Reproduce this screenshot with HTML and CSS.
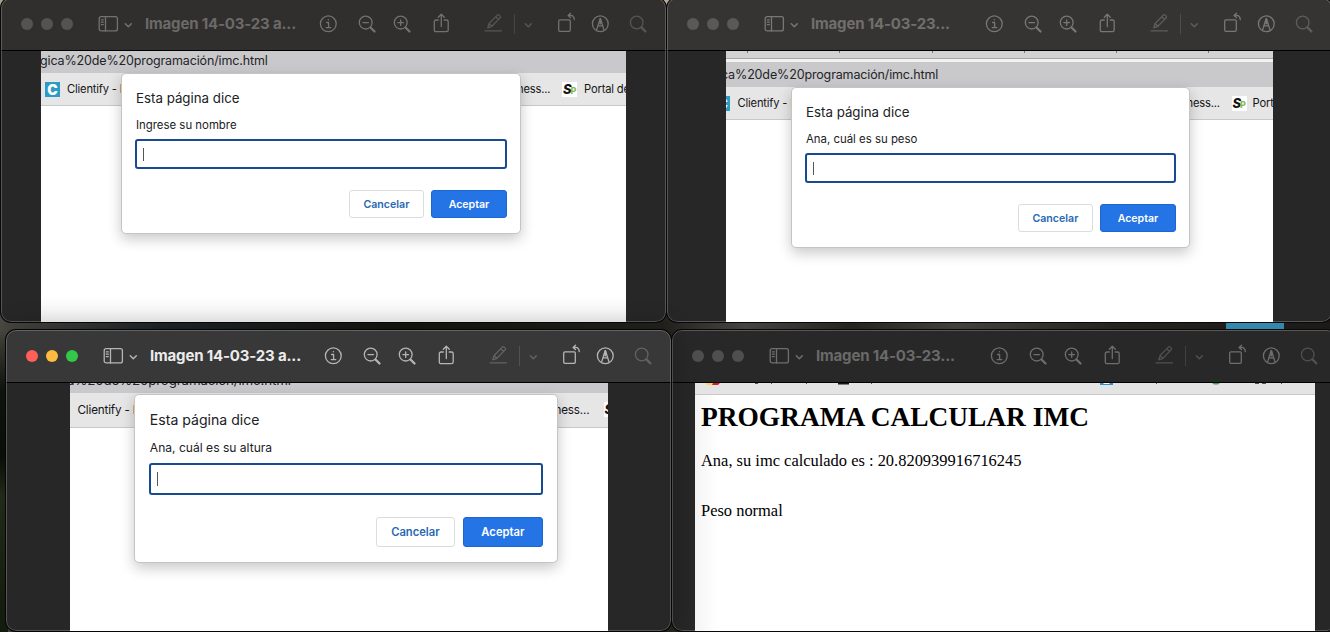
FILE: index.html
```
<!DOCTYPE html>
<html lang="es">
<head>
<meta charset="utf-8">
<title>Programa calcular IMC</title>
<link rel="stylesheet" href="styles.css">
</head>
<body>
<svg class="sprite" aria-hidden="true">
  <symbol id="i-side" viewBox="0 0 22 18"><rect x="2.2" y="1.7" width="18.2" height="14.2" rx="2"/><path d="M8.500 2v14M4.300 4.8h2M4.300 7.2h2M4.300 9.6h2"/></symbol>
  <symbol id="i-chev" viewBox="0 0 10 10"><path d="M2.300 3.7l3 3 3-3" stroke-width="1.5"/></symbol>
  <symbol id="i-info" viewBox="0 0 24 24"><circle cx="12.3" cy="11.8" r="7.9"/><path d="M10.6 10.5h2v5M10.2 15.6h4.6" /><circle cx="12.4" cy="7.8" r=".7" class="dotfill"/></symbol>
  <symbol id="i-out" viewBox="0 0 24 24"><circle cx="10.700" cy="10.6" r="6.4"/><path d="M7.900 10.6h5.6"/><path d="M15.5 15.5l4 4" stroke-width="2.300"/></symbol>
  <symbol id="i-in" viewBox="0 0 24 24"><circle cx="10.700" cy="10.6" r="6.4"/><path d="M7.900 10.6h5.6M10.700 7.8v5.6"/><path d="M15.5 15.5l4 4" stroke-width="2.300"/></symbol>
  <symbol id="i-share" viewBox="0 0 24 24"><path d="M9.3 8H7a1.7 1.7 0 0 0-1.700 1.700v8.300a1.700 1.700 0 0 0 1.700 1.700h10.500a1.700 1.700 0 0 0 1.700-1.700V9.700A1.700 1.700 0 0 0 17.500 8h-2.300M12.300 14.500V2.500M9.300 5.300l3-3 3 3"/></symbol>
  <symbol id="i-pen" viewBox="0 0 24 24"><path d="M4 18.800h16.500M6.800 15.800l1.300-4.300 8.200-8.400a1.300 1.300 0 0 1 1.900 0l.9.9a1.300 1.300 0 0 1 0 1.900l-8.200 8.400zM14.800 4.800l2.700 2.700M8.200 11.700l2.600 2.600"/></symbol>
  <symbol id="i-rot" viewBox="0 0 24 24"><rect x="4.700" y="7.900" width="11.600" height="11.400" rx="1.200"/><path d="M14.200 3.400h2.300c2.400 0 3.600 1.300 3.800 4.200M16.500 1.300l-2.400 2.100 2.400 2.100"/></symbol>
  <symbol id="i-mark" viewBox="0 0 24 24"><circle cx="12.300" cy="11.800" r="7.900"/><path d="M8.700 17.600l3-9.600q.6-1.500 1.200 0l3 9.600M10.200 13.800h4.200"/><path d="M12.300 7v4.500" stroke-width="2"/></symbol>
  <symbol id="i-find" viewBox="0 0 24 24"><circle cx="10.700" cy="10.500" r="6.300"/><path d="M15.400 15.400l4 4" stroke-width="2.200"/></symbol>
</svg>
<main class="desktop">
  <div class="desk-blue"></div>

  <section class="window w1">
    <header class="bar">
      <div class="lights"><i></i><i></i><i></i></div>
      <svg class="side"><use href="#i-side"/></svg><svg class="chev"><use href="#i-chev"/></svg>
      <h2>Imagen 14-03-23 a...</h2>
      <svg class="ic"><use href="#i-info"/></svg><svg class="ic out"><use href="#i-out"/></svg><svg class="ic in"><use href="#i-in"/></svg><svg class="ic share"><use href="#i-share"/></svg><svg class="ic pen"><use href="#i-pen"/></svg><span class="sep"></span><svg class="chev dim"><use href="#i-chev"/></svg><svg class="ic rot"><use href="#i-rot"/></svg><svg class="ic mark"><use href="#i-mark"/></svg><svg class="ic find"><use href="#i-find"/></svg>
    </header>
    <div class="page">
      <div class="url"><span>gica%20de%20programación/imc.html</span></div>
      <div class="marks"><b class="cl">C</b><span class="name">Clientify - I</span><span class="ness">ness...</span><b class="sp">S<em>P</em></b><span class="portal">Portal de</span></div>
      <div class="dialog">
        <h3>Esta página dice</h3><p>Ingrese su nombre</p>
        <div class="field"><i></i></div>
        <div class="buttons"><button>Cancelar</button><button class="ok">Aceptar</button></div>
      </div>
    </div>
  </section>

  <section class="window w2">
    <header class="bar">
      <div class="lights"><i></i><i></i><i></i></div>
      <svg class="side"><use href="#i-side"/></svg><svg class="chev"><use href="#i-chev"/></svg>
      <h2>Imagen 14-03-23...</h2>
      <svg class="ic"><use href="#i-info"/></svg><svg class="ic out"><use href="#i-out"/></svg><svg class="ic in"><use href="#i-in"/></svg><svg class="ic share"><use href="#i-share"/></svg><svg class="ic pen"><use href="#i-pen"/></svg><span class="sep"></span><svg class="chev dim"><use href="#i-chev"/></svg><svg class="ic rot"><use href="#i-rot"/></svg><svg class="ic mark"><use href="#i-mark"/></svg><svg class="ic find"><use href="#i-find"/></svg>
    </header>
    <div class="page">
      <div class="tabs"><i></i><i></i><i></i><i></i><i></i><i></i></div>
      <div class="url"><span>ca%20de%20programación/imc.html</span></div>
      <div class="marks"><b class="cl">C</b><span class="name">Clientify - I</span><span class="ness">ness...</span><b class="sp">S<em>P</em></b><span class="portal">Port</span></div>
      <div class="dialog">
        <h3>Esta página dice</h3><p>Ana, cuál es su peso</p>
        <div class="field"><i></i></div>
        <div class="buttons"><button>Cancelar</button><button class="ok">Aceptar</button></div>
      </div>
    </div>
  </section>

  <section class="window w4">
    <header class="bar">
      <div class="lights"><i></i><i></i><i></i></div>
      <svg class="side"><use href="#i-side"/></svg><svg class="chev"><use href="#i-chev"/></svg>
      <h2>Imagen 14-03-23...</h2>
      <svg class="ic"><use href="#i-info"/></svg><svg class="ic out"><use href="#i-out"/></svg><svg class="ic in"><use href="#i-in"/></svg><svg class="ic share"><use href="#i-share"/></svg><svg class="ic pen"><use href="#i-pen"/></svg><span class="sep"></span><svg class="chev dim"><use href="#i-chev"/></svg><svg class="ic rot"><use href="#i-rot"/></svg><svg class="ic mark"><use href="#i-mark"/></svg><svg class="ic find"><use href="#i-find"/></svg>
    </header>
    <div class="page result">
      <svg class="strip" viewBox="0 0 620 11"><path fill="#f8d64e" d="M11 0h8l-2 2h-5z"/><path fill="#d5202b" d="M18 0h7l-2 2h-6z"/><path fill="#181818" d="M143 0h11v1.500h-11z"/><path fill="#2a93c8" d="M405 0h13v2h-13z"/><path fill="#fff" d="M408 0h7l-1 1h-5z"/><path fill="#35a853" d="M517 0h8l-2 1.500h-4z"/><path fill="#555" d="M60 0h3v1h-3zM76 0h1v1h-1zM111 0h1v1h-1zM176 0h1v1h-1zM461 0h1v1h-1zM560 0h4v1h-4zM567 0h4v1h-4zM586 0h1v1h-1z"/></svg>
      <h1>PROGRAMA CALCULAR IMC</h1>
      <p>Ana, su imc calculado es : 20.820939916716245</p>
      <p class="weight">Peso normal</p>
    </div>
  </section>

  <section class="window w3">
    <header class="bar">
      <div class="lights"><i></i><i></i><i></i></div>
      <svg class="side"><use href="#i-side"/></svg><svg class="chev"><use href="#i-chev"/></svg>
      <h2>Imagen 14-03-23 a...</h2>
      <svg class="ic"><use href="#i-info"/></svg><svg class="ic out"><use href="#i-out"/></svg><svg class="ic in"><use href="#i-in"/></svg><svg class="ic share"><use href="#i-share"/></svg><svg class="ic pen"><use href="#i-pen"/></svg><span class="sep"></span><svg class="chev dim"><use href="#i-chev"/></svg><svg class="ic rot"><use href="#i-rot"/></svg><svg class="ic mark"><use href="#i-mark"/></svg><svg class="ic find"><use href="#i-find"/></svg>
    </header>
    <div class="page">
      <div class="url"><span>a%20de%20programación/imc.html</span></div>
      <div class="marks"><span class="name">Clientify - I</span><span class="ness">ness...</span><b class="sp">S<em>P</em></b></div>
      <div class="dialog">
        <h3>Esta página dice</h3><p>Ana, cuál es su altura</p>
        <div class="field"><i></i></div>
        <div class="buttons"><button>Cancelar</button><button class="ok">Aceptar</button></div>
      </div>
    </div>
  </section>
</main>
</body>
</html>
```

FILE: styles.css
```
* { box-sizing: border-box; }
body { margin: 0; font-family: Inter, "Liberation Sans", sans-serif; }
h1, h2, h3, p { margin: 0; }
.sprite { position: absolute; width: 0; height: 0; }
symbol .dotfill { fill: currentColor; stroke: none; }

.desktop {
  position: relative; width: 1330px; height: 632px; overflow: hidden;
  background:
    radial-gradient(circle at 0 0, #aaa18f 0 8px, transparent 12px),
    radial-gradient(circle at 666px 0, #b9ab96 0 5px, transparent 8px),
    linear-gradient(to right, #4b4942, #20252a 12%, #15160f 30%, #24231e 50%, #454442 56%, #252420 64%, #44413d 72%, #242320 84%, #1b1a18);
}
.desktop::before { content: ""; position: absolute; left: 0; top: 330px; width: 8px; height: 302px; background: linear-gradient(#4b4a42, #11160f 20%, #0c100b 42%, #26301b 55%, #151d10); }
.desk-blue { position: absolute; left: 1226px; top: 322px; width: 58px; height: 8px; background: #3487ad; }

.window {
  position: absolute; width: 665px; overflow: hidden; border-radius: 10px;
  background: #272727; box-shadow: 0 0 0 1px #080808;
  display: flex; flex-direction: column;
}
.window::after { content: ""; position: absolute; inset: 0; border: 1px solid rgba(255,255,255,.22); border-radius: 10px; pointer-events: none; }
.w1 { left: 1px; top: -2px; height: 324px; --bar: #302f2d; --txt: #6b6a68; --icon: #737270; --dim: #575654; --light: #545352; }
.w2 { left: 667px; top: -2px; height: 324px; --bar: #353432; --txt: #706f6d; --icon: #787775; --dim: #5e5d5b; --light: #5a5958; }
.w3 { left: 6px; top: 330px; height: 301px; --bar: #383838; --txt: #ececec; --icon: #b5b5b5; --dim: #626262; --light: #ff5f57; box-shadow: 0 0 0 1px #050505, 0 0 24px 4px rgba(0,0,0,.22); }
.w4 { left: 672px; top: 330px; height: 301px; --bar: #282828; --txt: #6a6a6a; --icon: #6e6e6e; --dim: #505050; --light: #4f4f4f; }

.bar {
  flex: none; height: 53px; padding: 0 0 1px 20px; display: flex; align-items: center;
  background: var(--bar); border-bottom: 1px solid #000; color: var(--icon);
}
.bar svg { flex: none; fill: none; stroke: currentColor; stroke-width: 1.3; stroke-linecap: round; stroke-linejoin: round; }
.lights { display: flex; gap: 8px; }
.lights i { width: 12px; height: 12px; border-radius: 50%; background: var(--light); }
.w3 .lights i:nth-child(2) { background: #febb40; }
.w3 .lights i:nth-child(3) { background: #34c84a; }
.side { width: 22px; height: 18px; margin-left: 24px; }
.chev { width: 10px; height: 10px; margin: 2px 0 0 4px; }
.bar h2 { flex: none; width: 171px; margin-left: 12px; font-size: 15px; line-height: 20px; font-weight: 700; letter-spacing: -.17px; color: var(--txt); white-space: nowrap; }
.ic { width: 24px; height: 24px; }
.out { margin-left: 15px; }
.in { margin-left: 11px; }
.share { margin-left: 15px; }
.pen { margin-left: 28px; color: var(--dim); }
.sep { width: 1px; height: 20px; margin-left: 9px; background: var(--dim); opacity: .6; }
.chev.dim { margin-left: 8px; color: var(--dim); }
.rot { margin-left: 21px; }
.mark { margin-left: 10px; }
.find { margin-left: 14px; color: var(--dim); }

.page { position: relative; flex: 1; overflow: hidden; background: #fff; font-size: 10px; }
.w1 .page { margin: 0 40px; width: 585px; background: linear-gradient(#fff 245px, #f2f2f2 271px); }
.w2 .page { margin-left: 59px; width: 547px; }
.w3 .page { margin-left: 64px; width: 538px; font-size: 10.6px; }
.w4 .page { margin-left: 23px; width: 620px; background: linear-gradient(to right, #f4f4f4, #fff 22px); }

.tabs { height: 11px; display: flex; padding-left: 21px; gap: 91.300px; background: linear-gradient(#d2d2d2 7px, #a5a5a5 7px 8px, #f2f2f2 8px); }
.tabs i { width: 1px; height: 2px; background: #777; }
.url { height: 22px; overflow: hidden; background: #c9c9cb; color: #242427; display: flex; }
.url span { font-size: 12.500px; letter-spacing: -.14px; line-height: 20px; white-space: nowrap; }
.w1 .url span { margin-left: -1px; }
.w2 .url { height: 25px; }
.w2 .url span { margin-left: -5px; line-height: 26px; }
.w3 .url { height: 10px; }
.w3 .url span { font-size: 13.300px; letter-spacing: -.14px; line-height: 18px; margin: -12px 0 0 -3px; }
.marks { height: 33px; display: flex; align-items: center; background: #e6e6e7; border-bottom: 1px solid #c8c8c8; font-size: 11.200px; letter-spacing: -.18px; color: #151515; white-space: nowrap; overflow: hidden; }
.marks > * { flex: none; }
.cl { width: 15px; height: 15px; margin-left: 4px; background: #2b9cc6; color: #fff; font-size: 14px; line-height: 15px; text-align: center; font-weight: 900; }
.name { width: 80px; margin-left: 7px; }
.ness { width: 45px; margin-left: 370px; }
.sp { width: 15px; height: 15px; background: #fff; font: italic 800 13px/15px Inter, sans-serif; padding-left: 1px; letter-spacing: -1px; overflow: hidden; }
.sp em { font-size: 9px; font-style: normal; color: #86b94e; }
.portal { margin-left: 7px; }
.w2 .cl { margin-left: -11px; }
.w2 .name { margin-left: 7.500px; }
.w2 .ness { margin-left: 369px; }
.w2 .portal { margin-left: 6px; }
.w3 .marks { height: 35px; padding-bottom: 1px; font-size: 11.700px; }
.w3 .name { margin-left: 7.500px; }
.w3 .ness { margin-left: 397px; width: 49px; }

.dialog {
  position: absolute; left: 80px; top: 22px; width: 400px; height: 161px; padding: 15px 1.400em 0;
  background: #fff; border: 1px solid #c4c4c4; border-radius: 5px; box-shadow: 0 5px 14px rgba(0,0,0,.22);
  color: #202124;
}
.w2 .dialog { left: 65px; top: 36px; width: 399px; }
.w3 .dialog { left: 64px; top: 11px; width: 424px; height: 169px; padding-top: 15.500px; }
.dialog h3 { font-size: 1.330em; line-height: 18px; font-weight: 400; white-space: nowrap; }
.dialog p { margin-top: 10px; font-size: 1.140em; line-height: 16px; white-space: nowrap; }
.field { height: 30px; margin: 6px -1px 0; padding: .7em .6em; border: 2px solid #174a91; border-radius: 3px; }
.field i { display: block; width: 1px; height: 1.300em; background: #555; }
.buttons { display: flex; justify-content: flex-end; gap: .75em; margin: 21px -.5px 0 0; }
.buttons button { width: 7.500em; height: 28px; padding: 0; border: 1px solid #dadce0; border-radius: 3px; background: #fff; color: #2767b5; font-family: inherit; font-size: 1em; font-weight: 600; letter-spacing: .02em; }
.buttons .ok { background: #2574e5; border-color: #1d66d0; color: #fff; }
.w3 .dialog p { margin-top: 11px; }
.w3 .field { height: 32px; margin-top: 7px; }
.w3 .buttons { margin-top: 22px; }
.w3 .buttons button { height: 30px; }
.buttons button { font-size: 1.060em; width: 7.080em; letter-spacing: 0; }

.result { font-family: "Liberation Serif", serif; color: #000; }
.strip { display: block; width: 620px; height: 12px; background: #e4e4e4; border-bottom: 1px solid #c8c8c8; }
.result h1 { margin: 7px 0 0 6px; font-size: 27.400px; line-height: 31px; }
.result p { margin: 18px 0 0 6px; font-size: 16.450px; line-height: 20px; }
.result .weight { margin-top: 30px; }
```
